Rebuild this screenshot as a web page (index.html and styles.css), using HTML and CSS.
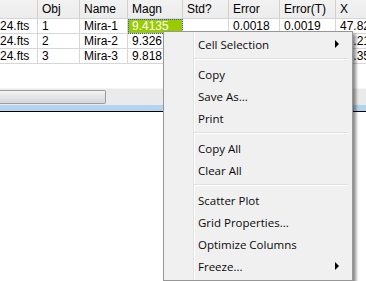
FILE: index.html
```html
<!DOCTYPE html>
<html lang="en">
<head>
    <meta charset="UTF-8">
    <title>Photometry Grid</title>
    <link rel="stylesheet" href="styles.css">
</head>
<body>
    <div class="grid">
        <table class="cells">
            <colgroup>
                <col class="c-file"><col class="c-obj"><col class="c-name"><col class="c-magn">
                <col class="c-std"><col class="c-err"><col class="c-errt"><col class="c-x">
            </colgroup>
            <tr>
                <th></th><th>Obj</th><th>Name</th><th>Magn</th>
                <th>Std?</th><th>Error</th><th>Error(T)</th><th>X</th>
            </tr>
            <tr>
                <td>24.fts</td><td>1</td><td>Mira-1</td><td class="selected">9.4135</td>
                <td></td><td>0.0018</td><td>0.0019</td><td>47.82</td>
            </tr>
            <tr>
                <td>24.fts</td><td>2</td><td>Mira-2</td><td>9.326</td>
                <td></td><td></td><td></td><td>76.21</td>
            </tr>
            <tr>
                <td>24.fts</td><td>3</td><td>Mira-3</td><td>9.818</td>
                <td></td><td></td><td></td><td>75.35</td>
            </tr>
        </table>
        <div class="blank"></div>
        <div class="hscroll"><div class="thumb"></div></div>
        <div class="band"></div>
    </div>

    <div class="menu">
        <div class="item">Cell Selection <span class="arrow"></span></div>
        <div class="sep"></div>
        <div class="item">Copy</div>
        <div class="item">Save As...</div>
        <div class="item">Print</div>
        <div class="sep"></div>
        <div class="item">Copy All</div>
        <div class="item">Clear All</div>
        <div class="sep"></div>
        <div class="item">Scatter Plot</div>
        <div class="item">Grid Properties...</div>
        <div class="item">Optimize Columns</div>
        <div class="item">Freeze... <span class="arrow"></span></div>
    </div>
</body>
</html>
```

FILE: styles.css
```css
body {
    margin: 0;
    background: #fff;
    font-family: 'Liberation Sans', Arial, sans-serif;
    font-size: 12px;
    color: #000;
}
.grid {
    width: 366px;
    overflow: hidden;
}
.cells {
    border-collapse: separate;
    border-spacing: 0;
    table-layout: fixed;
    width: 396px;
}
.c-file { width: 38px; }
.c-obj { width: 42px; }
.c-name { width: 48px; }
.c-magn { width: 55px; }
.c-std { width: 46px; }
.c-err { width: 51px; }
.c-errt { width: 56px; }
.c-x { width: 60px; }
th, td {
    padding: 0 4px;
    text-align: left;
    font-weight: normal;
    white-space: nowrap;
    overflow: hidden;
    border-right: 1px solid #d6d6d6;
    border-bottom: 1px solid #d6d6d6;
}
th {
    height: 18px;
    line-height: 18px;
    background: linear-gradient(#f2f2f2, #ececec);
    border-right-color: #d0d0d0;
}
td {
    line-height: 14px;
}
td:first-child {
    padding-left: 0;
}
td.selected {
    background: #99cc00;
    color: #fff;
    outline: 1px dotted #3b4cff;
    outline-offset: -1px;
}
.blank {
    height: 24px;
}
.hscroll {
    height: 17px;
    background: #eaeaea;
    border-top: 1px solid #f4f4f4;
    box-sizing: border-box;
    padding-top: 1px;
}
.thumb {
    width: 106px;
    height: 14px;
    box-sizing: border-box;
    border: 1px solid #9c9c9c;
    border-left: none;
    border-radius: 0 2px 2px 0;
    background: linear-gradient(#f3f3f3, #e4e4e4 50%, #d6d6d6);
}
.band {
    height: 6px;
    background: #b1d4ef;
    border-bottom: 1px solid #000;
}
.menu {
    position: absolute;
    left: 163px;
    top: 31px;
    width: 188px;
    padding: 1px 0 3px;
    border: 1px solid #979797;
    background: linear-gradient(90deg, #f0f0f0 29px, #e2e3e3 29px, #e2e3e3 30px, #fff 30px, #fff 31px, #f0f0f0 31px);
    box-shadow: 3px 3px 3px rgba(0, 0, 0, 0.45);
    font-family: 'Open Sans', 'Noto Sans', sans-serif;
    font-size: 11.5px;
    color: #0a0a0a;
}
.item {
    display: flex;
    align-items: center;
    height: 22px;
    padding-left: 34px;
    padding-right: 13px;
}
.arrow {
    margin-left: auto;
    width: 0;
    height: 0;
    border-top: 4px solid transparent;
    border-bottom: 4px solid transparent;
    border-left: 4px solid #000;
}
.sep {
    height: 1px;
    margin: 3px 4px 3px 30px;
    background: #e0e0e0;
    border-bottom: 1px solid #fff;
}
```
